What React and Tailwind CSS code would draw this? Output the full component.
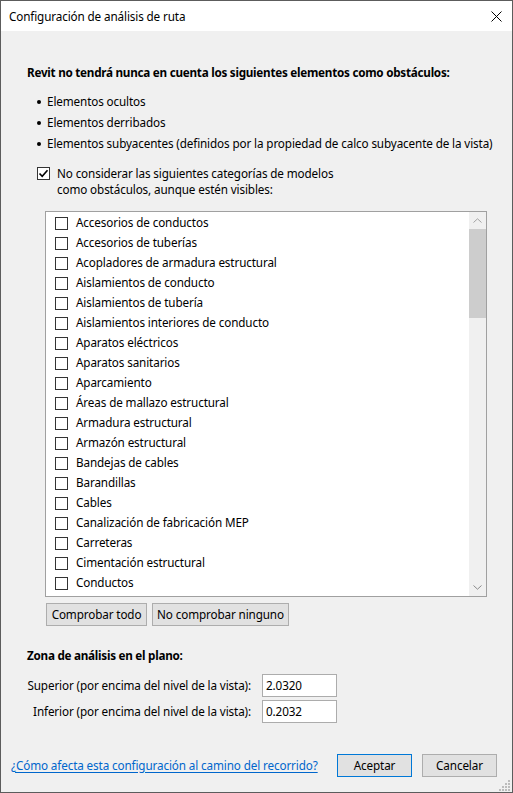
import React from "react";

const items = [
  "Accesorios de conductos",
  "Accesorios de tuberías",
  "Acopladores de armadura estructural",
  "Aislamientos de conducto",
  "Aislamientos de tubería",
  "Aislamientos interiores de conducto",
  "Aparatos eléctricos",
  "Aparatos sanitarios",
  "Aparcamiento",
  "Áreas de mallazo estructural",
  "Armadura estructural",
  "Armazón estructural",
  "Bandejas de cables",
  "Barandillas",
  "Cables",
  "Canalización de fabricación MEP",
  "Carreteras",
  "Cimentación estructural",
  "Conductos",
];

function Box({ checked }) {
  return (
    <span className="w-[13px] h-[13px] shrink-0 border border-[#333333] bg-white flex items-center justify-center">
      {checked && (
        <svg width="11" height="11" viewBox="0 0 11 11">
          <path d="M1.5 5.5 L4.2 8.3 L9.5 2.3" fill="none" stroke="#000" strokeWidth="1.6" />
        </svg>
      )}
    </span>
  );
}

export default function App() {
  return (
    <div
      className="relative w-[513px] h-[793px] bg-[#f0f0f0] border border-[#5c5c5c] flex flex-col text-[11.7px] tracking-[-0.12px] text-black overflow-hidden"
      style={{ fontFamily: '"Noto Sans", "Liberation Sans", sans-serif' }}
    >
      {/* Title bar */}
      <div className="h-[30px] bg-white flex items-center justify-between pl-[8px] pr-[10px] shrink-0">
        <span className="leading-[16px]">Configuración de análisis de ruta</span>
        <svg width="11" height="11" viewBox="0 0 11 11">
          <path d="M0.5 0.5 L10.5 10.5 M10.5 0.5 L0.5 10.5" stroke="#000" strokeWidth="1" />
        </svg>
      </div>

      <div className="pl-[26px] flex flex-col">
        <div className="mt-[33px] font-bold leading-[16px] tracking-[-0.26px] whitespace-nowrap">
          Revit no tendrá nunca en cuenta los siguientes elementos como obstáculos:
        </div>
        <div className="mt-[11px] pl-[10px] flex flex-col">
          {[
            "Elementos ocultos",
            "Elementos derribados",
            "Elementos subyacentes (definidos por la propiedad de calco subyacente de la vista)",
          ].map((t) => (
            <div key={t} className="h-[21px] flex items-center whitespace-nowrap">
              <span className="w-[4px] h-[4px] rounded-full bg-black mr-[6px]" />
              <span>{t}</span>
            </div>
          ))}
        </div>

        <div className="mt-[11px] pl-[10px] flex items-start">
          <span className="mt-[2px]">
            <Box checked />
          </span>
          <div className="ml-[7px] leading-[16px] whitespace-nowrap">
            No considerar las siguientes categorías de modelos
            <br />
            como obstáculos, aunque estén visibles:
          </div>
        </div>

        {/* List box */}
        <div className="mt-[14px] ml-[18px] w-[442px] h-[386px] border border-[#a0a0a0] bg-white flex overflow-hidden">
          <div className="flex-1 pt-[1px] pl-[9px] overflow-hidden">
            {items.map((t) => (
              <div key={t} className="h-[20px] flex items-center whitespace-nowrap">
                <Box />
                <span className="ml-[8px]">{t}</span>
              </div>
            ))}
            <div className="h-[20px] flex items-center">
              <Box />
            </div>
          </div>
          <div className="w-[17px] bg-[#f0f0f0] flex flex-col shrink-0">
            <div className="h-[17px] flex items-center justify-center">
              <svg width="9" height="5" viewBox="0 0 9 5">
                <path d="M0.5 4.5 L4.5 0.8 L8.5 4.5" fill="none" stroke="#a3a3a3" strokeWidth="1" />
              </svg>
            </div>
            <div className="h-[89px] bg-[#cdcdcd]" />
            <div className="flex-1" />
            <div className="h-[17px] flex items-center justify-center">
              <svg width="9" height="5" viewBox="0 0 9 5">
                <path d="M0.5 0.5 L4.5 4.2 L8.5 0.5" fill="none" stroke="#8a8a8a" strokeWidth="1" />
              </svg>
            </div>
          </div>
        </div>

        <div className="mt-[6px] ml-[19px] flex gap-[5px]">
          <button className="w-[101px] h-[23px] bg-[#e1e1e1] border border-[#adadad] flex items-center justify-center whitespace-nowrap">
            Comprobar todo
          </button>
          <button className="w-[137px] h-[23px] bg-[#e1e1e1] border border-[#adadad] flex items-center justify-center whitespace-nowrap">
            No comprobar ninguno
          </button>
        </div>

        <div className="mt-[21px] font-bold leading-[16px] tracking-[-0.26px]">Zona de análisis en el plano:</div>

        <div className="mt-[11px] grid grid-cols-[224px_75px] gap-x-[11px] gap-y-[3px] items-center">
          <div className="text-right whitespace-nowrap">Superior (por encima del nivel de la vista):</div>
          <div className="h-[23px] bg-white border border-[#acacac] flex items-center pl-[3px]">2.0320</div>
          <div className="text-right whitespace-nowrap">Inferior (por encima del nivel de la vista):</div>
          <div className="h-[23px] bg-white border border-[#acacac] flex items-center pl-[3px]">0.2032</div>
        </div>
      </div>

      <div className="mt-auto mb-[15px] pl-[10px] pr-[15px] flex items-center">
        <span className="text-[#0066cc] underline underline-offset-2 whitespace-nowrap">
          ¿Cómo afecta esta configuración al camino del recorrido?
        </span>
        <div className="ml-auto flex gap-[10px]">
          <button className="w-[75px] h-[23px] bg-[#e1e1e1] border border-[#0078d7] flex items-center justify-center">
            Aceptar
          </button>
          <button className="w-[75px] h-[23px] bg-[#e1e1e1] border border-[#adadad] flex items-center justify-center">
            Cancelar
          </button>
        </div>
      </div>

      {/* resize grip */}
      <svg className="absolute right-[1px] bottom-[1px]" width="12" height="12" viewBox="0 0 12 12">
        {[
          [9, 1], [9, 4], [6, 4], [9, 7], [6, 7], [3, 7], [9, 10], [6, 10], [3, 10], [0, 10],
        ].map(([x, y]) => (
          <rect key={x + "-" + y} x={x} y={y} width="2" height="2" fill="#bcbcbc" />
        ))}
      </svg>
    </div>
  );
}
